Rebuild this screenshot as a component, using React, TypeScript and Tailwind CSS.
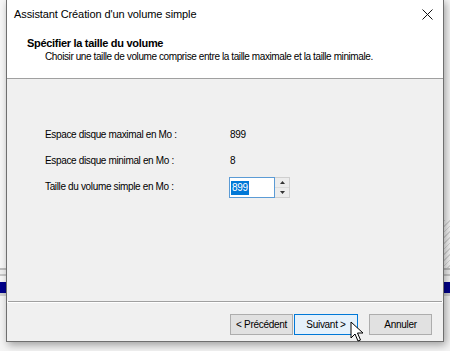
import React from "react";

const ui = { fontFamily: '"Liberation Sans", Arial, sans-serif' };

function Cursor() {
  return (
    <svg width="14" height="22" viewBox="0 0 14 22" className="absolute left-[350px] top-[321px]">
      <path d="M1 1 L1 17 L5 13 L8 20 L10.5 19 L7.5 12 L13 12 Z" fill="#ffffff" stroke="#000000" strokeWidth="1" strokeLinejoin="miter" />
    </svg>
  );
}

export default function App() {
  return (
    <div className="relative w-[450px] h-[351px] overflow-hidden bg-[#f4f4f4]" style={ui}>
      {/* background desktop content */}
      <div className="absolute left-0 top-0 w-[450px] h-[351px] flex flex-col">
        <div className="h-[268px] bg-[#f7f7f7]" />
        <div className="h-[2px] bg-[#bdbdbd]" />
        <div className="h-[4px] bg-[#f0f0f0]" />
        <div className="h-[2px] bg-[#c8c8c8]" />
        <div className="h-[6px] bg-[#f7f7f7]" />
        <div className="h-[11px] bg-[#00008b]" />
        <div className="h-[3px] bg-[#d0d0d0]" />
        <div className="flex-1 bg-[#f4f4f4]" />
      </div>
      <div className="absolute left-[444px] top-[220px] w-[6px] h-[48px] bg-[repeating-linear-gradient(135deg,#d8d8d8_0px,#d8d8d8_1px,#f7f7f7_1px,#f7f7f7_4px)]" />

      {/* window */}
      <div className="absolute left-[6px] top-[-1px] w-[438px] h-[343px] border border-[#6f6f6f] bg-white flex flex-col shadow-[2px_3px_8px_rgba(0,0,0,0.35)]">
        {/* title bar */}
        <div className="h-[29px] flex items-center justify-between pl-[7px] pr-[8px]">
          <span className="text-[11px] text-black tracking-[-0.1px]">Assistant Création d'un volume simple</span>
          <svg width="11" height="11" viewBox="0 0 11 11" className="mr-[2px]">
            <path d="M0.5 0.5 L10.5 10.5 M10.5 0.5 L0.5 10.5" stroke="#111" strokeWidth="1" />
          </svg>
        </div>
        {/* header */}
        <div className="h-[50px] flex flex-col pl-[20px] pt-[8px] border-b border-[#a0a0a0]">
          <span className="text-[11px] font-bold text-black leading-[13px] tracking-[-0.3px]">Spécifier la taille du volume</span>
          <span className="text-[10px] text-black leading-[13px] pl-[18px] tracking-[-0.4px]">Choisir une taille de volume comprise entre la taille maximale et la taille minimale.</span>
        </div>
        {/* body */}
        <div className="flex-1 bg-[#f0f0f0] flex flex-col pl-[38px] pt-[49px] text-[10px] text-black tracking-[-0.35px]">
          <div className="flex items-center h-[13px]">
            <span className="w-[185px]">Espace disque maximal en Mo :</span>
            <span>899</span>
          </div>
          <div className="flex items-center h-[13px] mt-[13px]">
            <span className="w-[185px]">Espace disque minimal en Mo :</span>
            <span>8</span>
          </div>
          <div className="flex items-center mt-[10px]">
            <span className="w-[184px] -mt-[3px]">Taille du volume simple en Mo :</span>
            <div className="flex h-[21px]">
              <div className="w-[46px] flex items-center pl-[1px] border border-[#5b9bd5] bg-white">
                <span className="bg-[#0078d7] text-white px-[1px] leading-[14px]">899</span>
              </div>
              <div className="w-[15px] flex flex-col border border-l-0 border-[#cfcfcf] bg-[#f0f0f0]">
                <div className="flex-1 flex items-center justify-center border-b border-[#dcdcdc] bg-[#ececec]">
                  <svg width="5" height="3" viewBox="0 0 5 3"><path d="M0 3 L2.5 0 L5 3 Z" fill="#333" /></svg>
                </div>
                <div className="flex-1 flex items-center justify-center bg-[#ececec]">
                  <svg width="5" height="3" viewBox="0 0 5 3"><path d="M0 0 L2.5 3 L5 0 Z" fill="#333" /></svg>
                </div>
              </div>
            </div>
          </div>
        </div>
        {/* separator */}
        <div className="h-[1px] bg-[#a0a0a0] mx-[1px]" />
        <div className="h-[1px] bg-white" />
        {/* footer */}
        <div className="h-[38px] bg-[#f0f0f0] flex items-start justify-end pt-[11px] pr-[11px] text-[10px] text-black">
          <button className="w-[63px] h-[21px] border border-[#adadad] bg-[#e1e1e1] flex items-center justify-center tracking-[-0.3px]">&lt; Précédent</button>
          <button className="w-[64px] h-[21px] ml-[1px] border border-[#0078d7] bg-[#e5f1fb] flex items-center justify-center tracking-[-0.3px]">Suivant &gt;</button>
          <button className="w-[63px] h-[21px] ml-[11px] border border-[#adadad] bg-[#e1e1e1] flex items-center justify-center tracking-[-0.3px]">Annuler</button>
        </div>
      </div>
      <Cursor />
    </div>
  );
}
